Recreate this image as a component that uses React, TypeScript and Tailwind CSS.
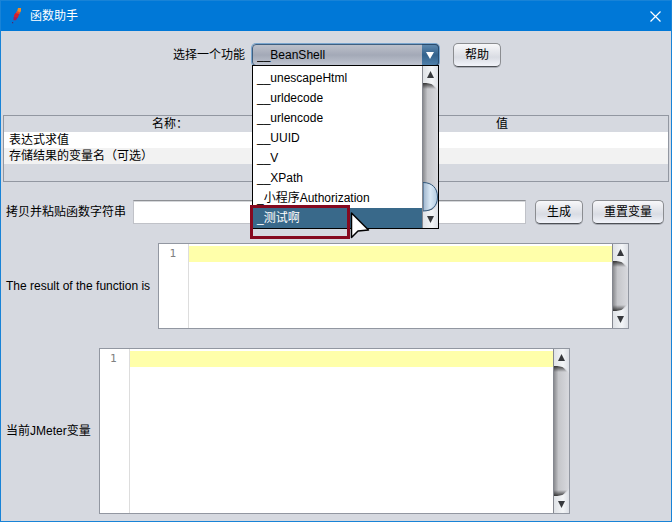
import { useId, useState } from "react";

const FUNCTIONS = [
  "__unescapeHtml",
  "__urldecode",
  "__urlencode",
  "__UUID",
  "__V",
  "__XPath",
  "_小程序Authorization",
  "_测试啊",
];

const PARAMS = ["表达式求值", "存储结果的变量名（可选）"];

const buttonClass =
  "h-6 shrink-0 rounded-[5px] border border-[#8b8d91] border-b-[#4d5055] bg-linear-to-b from-[#f8f8fa] via-[#d9dce3] via-60% to-[#f2f4fa] px-[11px] leading-4 shadow-[0_1px_0_#a9acb4]";

function FeatherIcon() {
  return (
    <svg width="10" height="16" viewBox="0 0 10 16" aria-hidden="true">
      <path d="M6 0H9V3L7.600 5.500 4.800 4.800Z" fill="#f08a24" />
      <path d="M4.800 3 8 4.200 7 7 3.400 6.200Z" fill="#e5482c" />
      <path d="M3.400 5 7.200 6 5.800 10 2 9.400V7.200Z" fill="#d3202f" />
      <path d="M1.600 9 5.600 9.600 4 12.200H1.400Z" fill="#a01f5c" />
      <path d="M0 14H1.200V15.200H0Z" fill="#56236b" />
    </svg>
  );
}

function ScrollCap({ dir }: { dir: "up" | "down" }) {
  const id = useId();
  const up = dir === "up";
  return (
    <button type="button" aria-label={up ? "Scroll up" : "Scroll down"} className="block">
      <svg width="15" height="26" viewBox="0 0 15 26" className="block">
        <defs>
          <linearGradient id={`${id}b`}>
            <stop offset="0" stopColor="#dfe2e6" />
            <stop offset="0.6" stopColor="#f3f5f7" />
            <stop offset="1" stopColor="#dde0e6" />
          </linearGradient>
          <linearGradient id={`${id}s`} x1="0" y1={up ? "0" : "1"} x2="0" y2={up ? "1" : "0"}>
            <stop offset="0" stopColor="#222" stopOpacity="0.85" />
            <stop offset="1" stopColor="#222" stopOpacity="0" />
          </linearGradient>
        </defs>
        {/* shadow that the cap throws on the track */}
        <path d={up ? "M0 17H8L13 23H0Z" : "M0 9H8L13 3H0Z"} fill={`url(#${id}s)`} />
        <path
          d={up ? "M0 0H15V25C13 19 9 17 0 17Z" : "M0 26H15V1C13 7 9 9 0 9Z"}
          fill={`url(#${id}b)`}
        />
        <path d={up ? "M7.500 5 11 12H4Z" : "M7.500 21 11 14H4Z"} fill="#37393d" />
      </svg>
    </button>
  );
}

function Scrollbar({ thumb = false }: { thumb?: boolean }) {
  return (
    <div className="relative flex w-4 shrink-0 flex-col justify-between border-l border-[#858890] bg-linear-to-r from-[#8b8c90] via-[#c5c6ca] via-30% to-[#d8d9de]">
      <ScrollCap dir="up" />
      <ScrollCap dir="down" />
      {thumb && (
        <svg width="15" height="30" viewBox="0 0 15 30" className="absolute bottom-4 left-0">
          <defs>
            <linearGradient id="thumb">
              <stop offset="0" stopColor="#9db3cb" />
              <stop offset="0.5" stopColor="#d9e8f5" />
              <stop offset="1" stopColor="#b3cbe0" />
            </linearGradient>
          </defs>
          <path
            d="M0 .5C9 .5 14.500 6 14.500 15S9 29 0 29Z"
            fill="url(#thumb)"
            stroke="#33587c"
          />
        </svg>
      )}
    </div>
  );
}

function Editor({ id, tall = false }: { id: string; tall?: boolean }) {
  return (
    <div
      className={`flex w-[471px] border border-[#9297a1] bg-white ${tall ? "h-[166px]" : "h-[86px]"}`}
    >
      <div className="w-[30px] shrink-0 border-r border-[#dddddd] pt-[2px] pr-[12px] text-right font-['DejaVu_Sans_Mono','Liberation_Mono',monospace] text-[11px] leading-4 text-[#808080]">
        1
      </div>
      <textarea
        id={id}
        spellCheck={false}
        className="min-w-0 flex-1 resize-none overflow-hidden bg-[linear-gradient(#ffffaa,#ffffaa)] bg-[length:100%_16px] bg-[position:0_2px] bg-no-repeat pt-[2px] leading-4 outline-none"
      />
      <Scrollbar />
    </div>
  );
}

function FunctionPicker() {
  const [selected, setSelected] = useState("_测试啊");

  return (
    <div className="relative w-[187px]">
      <select
        id="function"
        className="block h-[22px] w-full appearance-none rounded-[4px] border border-[#3f5f80] bg-linear-to-b from-[#bcc0ca] via-[#a3a9b7] via-50% to-[#bfc4d0] pl-1 leading-4 shadow-[0_0_0_1px_#7aa6cf] outline-none"
      >
        <option>__BeanShell</option>
        {FUNCTIONS.map((name) => (
          <option key={name}>{name}</option>
        ))}
      </select>
      <span className="pointer-events-none absolute top-0 right-0 flex h-[22px] w-[17px] items-center justify-center rounded-r-[4px] border border-l-0 border-[#294b6d] bg-linear-to-b from-[#5d87ad] via-[#33628c] via-50% to-[#4e7fa9]">
        <svg width="8" height="7" viewBox="0 0 8 7">
          <path d="M0 0H8L4 7Z" fill="#fff" />
        </svg>
      </span>

      <div className="absolute top-[21px] left-0 z-10 flex w-full border border-black bg-white">
        <ul role="listbox" aria-label="选择一个功能" className="min-w-0 flex-1 pt-[2px]">
          {FUNCTIONS.map((name) => (
            <li
              key={name}
              role="option"
              aria-selected={name === selected}
              onMouseEnter={() => setSelected(name)}
              className={`h-5 pl-1 leading-5 whitespace-nowrap ${
                name === selected ? "bg-[#39698a] text-white" : ""
              }`}
            >
              {name}
            </li>
          ))}
        </ul>
        <Scrollbar thumb />
        <div className="pointer-events-none absolute -bottom-[11px] -left-[3px] h-[34px] w-[100px] border-3 border-[#85091f]" />
        <svg
          width="20"
          height="28"
          viewBox="0 0 20 28"
          className="pointer-events-none absolute -bottom-[11px] left-[97px]"
        >
          <path
            d="M1.500 2V26.500L8 20L18.500 19Z"
            fill="#fff"
            stroke="#000"
            strokeWidth="1.500"
            strokeLinejoin="round"
          />
        </svg>
      </div>
    </div>
  );
}

export default function App() {
  return (
    <div className="flex min-h-screen flex-col border border-[#1883d7] bg-[#d6d9e0] font-['Liberation_Sans','Noto_Sans_CJK_SC',sans-serif] text-[12px] leading-4 text-black">
      <header className="flex h-[30px] items-center bg-[#0078d7] pr-[10px] pl-[11px] text-white">
        <FeatherIcon />
        <h1 className="ml-2 flex-1">函数助手</h1>
        <button type="button" aria-label="Close">
          <svg width="11" height="11" viewBox="0 0 11 11" stroke="#fff" strokeWidth="1.200">
            <path d="M.5 .5 10.500 10.500M10.500 .5 .5 10.500" />
          </svg>
        </button>
      </header>

      <main className="flex flex-col px-[2px]">
        <div className="flex h-12 items-center justify-center pl-[2px]">
          <label htmlFor="function" className="mr-[7px]">
            选择一个功能
          </label>
          <FunctionPicker />
          <button type="button" className={`${buttonClass} ml-[14px]`}>
            帮助
          </button>
        </div>

        <div className="mt-9 h-[67px] border border-[#9297a1]">
          <table className="w-full table-fixed border-collapse leading-[15px]">
            <thead>
              <tr className="h-4">
                <th className="p-0 pt-px font-normal">名称：</th>
                <th className="p-0 pt-px font-normal">值</th>
              </tr>
            </thead>
            <tbody>
              {PARAMS.map((name) => (
                <tr key={name} className="h-4 bg-white even:bg-[#f2f2f2]">
                  <td className="p-0 pt-px pl-[5px]">{name}</td>
                  <td className="p-0" />
                </tr>
              ))}
            </tbody>
          </table>
        </div>

        <div className="mt-[18px] flex items-center gap-[9px] pr-[5px] pl-[3px]">
          <label htmlFor="copy">拷贝并粘贴函数字符串</label>
          <input
            id="copy"
            type="text"
            className="-ml-[2px] h-6 min-w-0 flex-1 border border-[#c0c2c8] border-t-[#8d8f94] bg-white px-1 shadow-[inset_0_1px_0_#d5d7da] outline-none"
          />
          <button type="button" className={buttonClass}>
            生成
          </button>
          <button type="button" className={buttonClass}>
            重置变量
          </button>
        </div>

        <div className="mt-[19px] flex items-center gap-2 pl-[3px]">
          <label htmlFor="result" className="whitespace-nowrap">
            The result of the function is
          </label>
          <Editor id="result" />
        </div>

        <div className="mt-[19px] flex items-center gap-2 pb-[7px] pl-[3px]">
          <label htmlFor="variables" className="whitespace-nowrap">
            当前JMeter变量
          </label>
          <Editor id="variables" tall />
        </div>
      </main>
    </div>
  );
}
